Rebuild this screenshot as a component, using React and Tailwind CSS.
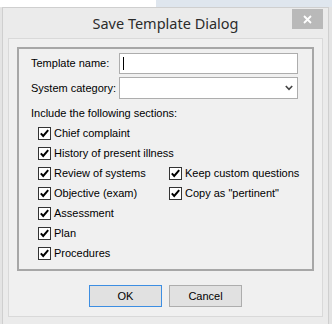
import React from "react";

function Check({ label }) {
  return (
    <label className="flex items-center h-[20px] gap-[3px] text-[11px] text-black whitespace-nowrap">
      <svg width="13" height="13" viewBox="0 0 13 13" className="shrink-0">
        <rect x="0.5" y="0.5" width="12" height="12" fill="#fff" stroke="#333" />
        <path d="M2.8 6.4 L5.2 9 L10.2 3.2" fill="none" stroke="#000" strokeWidth="2" />
      </svg>
      <span>{label}</span>
    </label>
  );
}

export default function App() {
  return (
    <div className="w-[332px] h-[324px] overflow-hidden bg-[#e4e4e4] font-['Liberation_Sans',Arial,sans-serif]">
      {/* window behind */}
      <div className="flex h-[7px]">
        <div className="w-[156px] bg-white" />
        <div className="flex-1 bg-[#dfe6ee]" />
      </div>

      {/* dialog frame */}
      <div className="ml-[2px] w-[327px] h-[317px] bg-[#ebebeb] border border-[#cfcfcf] border-b-0 flex flex-col">
        <div className="relative h-[30px] flex items-center justify-center">
          <span className="font-['Noto_Sans',sans-serif] text-[14.5px] text-[#2b2b2b] mt-[2px]">
            Save Template Dialog
          </span>
          <button className="absolute right-[5px] top-[1px] w-[31px] h-[20px] bg-[#b9b9b9] flex items-center justify-center">
            <svg width="9" height="9" viewBox="0 0 9 9">
              <path d="M1 1 L8 8 M8 1 L1 8" stroke="#fff" strokeWidth="1.8" />
            </svg>
          </button>
        </div>

        {/* client area */}
        <div className="mx-[5px] h-[279px] bg-[#f0f0f0] border border-[#d9d9d9] flex flex-col">
          <div className="mx-[8px] mt-[8px] h-[224px] border-2 border-[#a7a7a7] pl-[12px] pr-[14px] pt-[4px] text-[11px] text-black">
            <div className="flex items-center h-[21px]">
              <span className="w-[88px]">Template name:</span>
              <div className="flex-1 h-[21px] bg-white border border-[#adadad] flex items-center pl-[3px]">
                <div className="w-px h-[13px] bg-black" />
              </div>
            </div>
            <div className="flex items-center h-[22px] mt-[3px]">
              <span className="w-[88px]">System category:</span>
              <div className="flex-1 h-[22px] bg-white border border-[#adadad] flex items-center justify-end pr-[4px]">
                <svg width="8" height="6" viewBox="0 0 8 6">
                  <path d="M0.8 1 L4 4.4 L7.2 1" fill="none" stroke="#444" strokeWidth="1.6" />
                </svg>
              </div>
            </div>
            <div className="h-[20px] mt-[4px] flex items-center">Include the following sections:</div>
            <div className="grid grid-cols-[131px_1fr] ml-[7px]">
              <Check label="Chief complaint" />
              <div />
              <Check label="History of present illness" />
              <div />
              <Check label="Review of systems" />
              <Check label="Keep custom questions" />
              <Check label="Objective (exam)" />
              <Check label={'Copy as "pertinent"'} />
              <Check label="Assessment" />
              <div />
              <Check label="Plan" />
              <div />
              <Check label="Procedures" />
            </div>
          </div>

          <div className="flex justify-center gap-[7px] mt-[14px] text-[11px] text-black">
            <button className="w-[73px] h-[22px] bg-[#e1e1e1] border border-[#3d8ee2]">OK</button>
            <button className="w-[73px] h-[22px] bg-[#e1e1e1] border border-[#adadad]">Cancel</button>
          </div>
        </div>
      </div>
    </div>
  );
}
